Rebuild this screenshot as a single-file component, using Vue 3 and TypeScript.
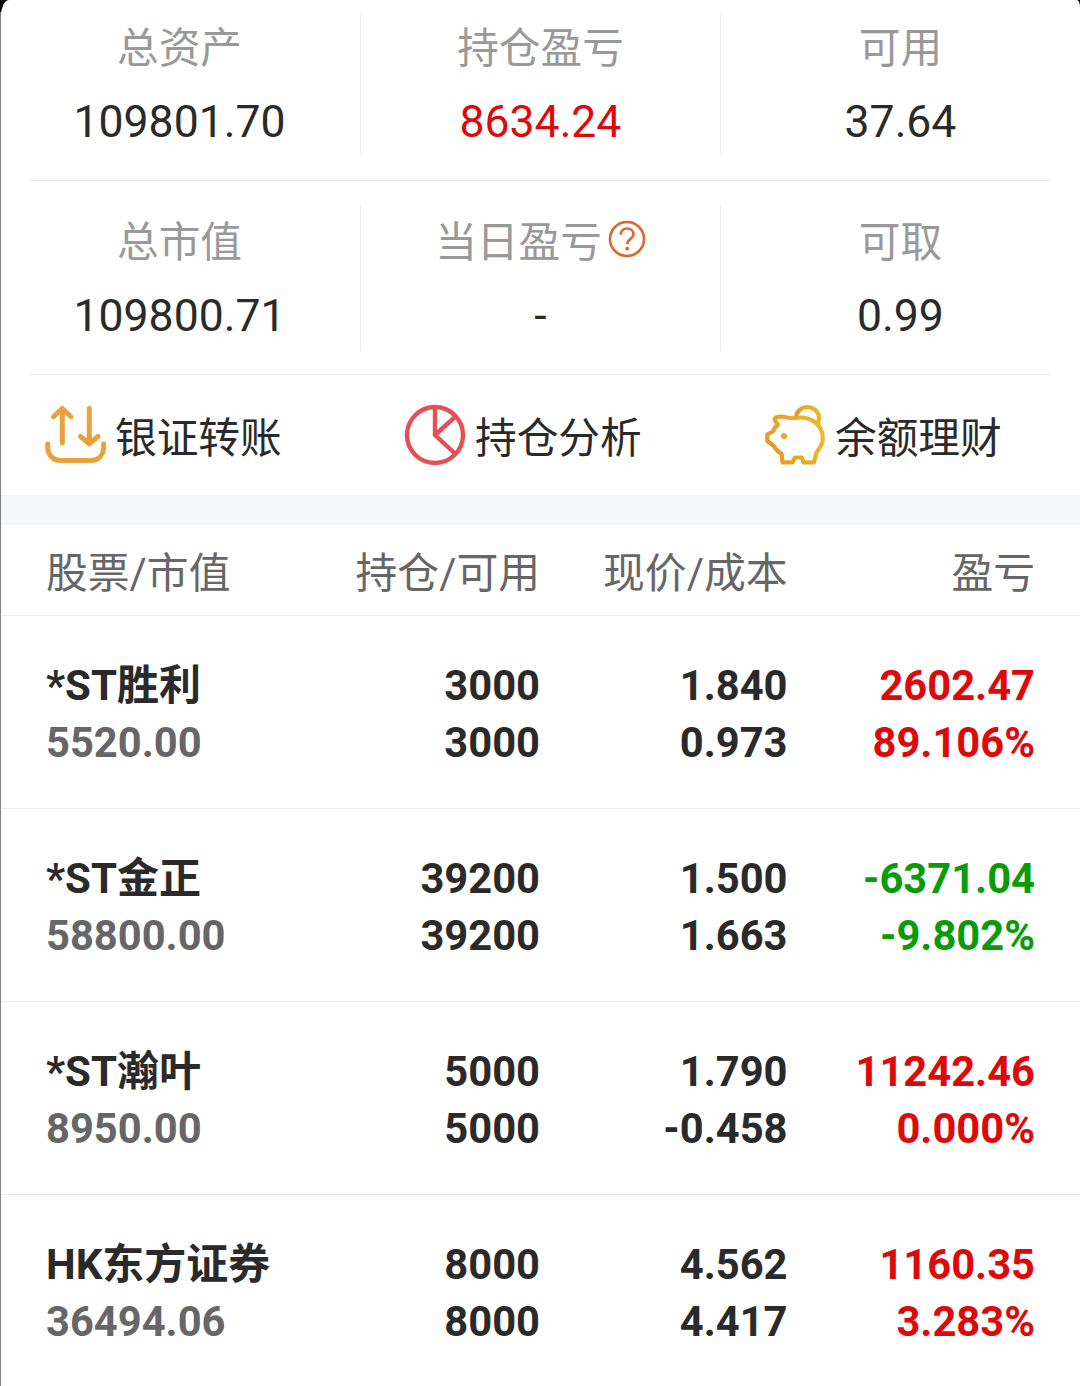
<script setup lang="ts">
interface Stat {
  label: string
  value: string
  tone?: 'up' | 'down'
  help?: boolean
}

interface Holding {
  name: string
  marketValue: string
  held: string
  available: string
  price: string
  cost: string
  profit: string
  ratio: string
  tone: 'up' | 'down'
}

const statRows: Stat[][] = [
  [
    { label: '总资产', value: '109801.70' },
    { label: '持仓盈亏', value: '8634.24', tone: 'up' },
    { label: '可用', value: '37.64' },
  ],
  [
    { label: '总市值', value: '109800.71' },
    { label: '当日盈亏', value: '-', help: true },
    { label: '可取', value: '0.99' },
  ],
]

const columns: string[] = ['股票/市值', '持仓/可用', '现价/成本', '盈亏']

const holdings: Holding[] = [
  { name: '*ST胜利', marketValue: '5520.00', held: '3000', available: '3000', price: '1.840', cost: '0.973', profit: '2602.47', ratio: '89.106%', tone: 'up' },
  { name: '*ST金正', marketValue: '58800.00', held: '39200', available: '39200', price: '1.500', cost: '1.663', profit: '-6371.04', ratio: '-9.802%', tone: 'down' },
  { name: '*ST瀚叶', marketValue: '8950.00', held: '5000', available: '5000', price: '1.790', cost: '-0.458', profit: '11242.46', ratio: '0.000%', tone: 'up' },
  { name: 'HK东方证券', marketValue: '36494.06', held: '8000', available: '8000', price: '4.562', cost: '4.417', profit: '1160.35', ratio: '3.283%', tone: 'up' },
]
</script>

<template>
  <div class="screen">
    <main class="sheet">
      <section class="summary">
        <div v-for="(row, i) in statRows" :key="i" class="stat-row">
          <div v-for="stat in row" :key="stat.label" class="stat">
            <div class="stat-label">
              <span>{{ stat.label }}</span>
              <svg v-if="stat.help" class="help" viewBox="0 0 38 38" fill="none" stroke="#dd6632" stroke-width="2.6">
                <circle cx="19" cy="19" r="17" />
                <path d="M12.8 14.8C12.8 10.8 15.3 8.5 19 8.5C22.8 8.5 25.5 10.9 25.5 14.2C25.5 18.6 19.2 18.9 19.2 24.3" />
                <circle cx="19.2" cy="28.6" r="1.9" fill="#dd6632" stroke="none" />
              </svg>
            </div>
            <div class="stat-value" :class="stat.tone">{{ stat.value }}</div>
          </div>
        </div>
      </section>

      <nav class="actions">
        <div class="action">
          <svg class="icon" viewBox="0 0 62 62" fill="none" stroke="#e9a13b" stroke-width="5" stroke-linecap="round" stroke-linejoin="round">
            <path d="M18.3 39V5M9.5 12.8L18.3 4.5L27 12.8" />
            <path d="M45.3 4.5V39M36.5 32.3L45.3 40L54 32.3" />
            <path d="M3.7 40V42.5C3.7 51 9 56.5 17 56.5H46C54.5 56.5 59.7 51 59.7 42.5V40" />
          </svg>
          <span>银证转账</span>
        </div>
        <div class="action">
          <svg class="icon" viewBox="0 0 62 62" fill="none" stroke="#e65054" stroke-width="4.4">
            <circle cx="31" cy="31" r="28" />
            <path d="M31 3V31L51.5 50M31 31L51.5 12.5" />
          </svg>
          <span>持仓分析</span>
        </div>
        <div class="action">
          <svg class="icon" viewBox="0 0 62 62" fill="none" stroke-width="4.2" stroke-linejoin="round" stroke-linecap="round">
            <defs>
              <linearGradient id="gold" x1="0" y1="0.6" x2="1" y2="0.3">
                <stop offset="0" stop-color="#e59a27" />
                <stop offset="1" stop-color="#eeb72a" />
              </linearGradient>
            </defs>
            <path stroke="url(#gold)" d="M32 13.3C32.7 7.3 37.5 3 43.5 3C50 3 55 8 55 14C55 16.3 54.5 18 53.8 20" />
            <path stroke="url(#gold)" d="M10.5 15C12 12.5 15.5 12.3 19.5 12.8C23 13.5 26 14.5 30 14.2C46 11 58.8 20 58.8 34.5C58.8 41 55 44.5 52.5 48.5L50 58.3H39.5L37.700 53.5H31L28.5 58.3H18.5L17.5 49.5C13.5 48 11.5 44.5 9.3 41.5L3.3 37V30.5L8.8 27.5C10 25 11.5 22.5 14 20.5C12.5 18.5 11 17.5 10.5 15Z" />
            <circle cx="20" cy="32" r="3" fill="#e7a12a" />
          </svg>
          <span>余额理财</span>
        </div>
      </nav>

      <div class="band"></div>

      <section class="table">
        <div class="row head">
          <div v-for="c in columns" :key="c" class="cell">{{ c }}</div>
        </div>
        <div v-for="h in holdings" :key="h.name" class="row body">
          <div class="cell">
            <div class="name">{{ h.name }}</div>
            <div class="muted">{{ h.marketValue }}</div>
          </div>
          <div class="cell">
            <div>{{ h.held }}</div>
            <div>{{ h.available }}</div>
          </div>
          <div class="cell">
            <div>{{ h.price }}</div>
            <div>{{ h.cost }}</div>
          </div>
          <div class="cell" :class="h.tone">
            <div>{{ h.profit }}</div>
            <div>{{ h.ratio }}</div>
          </div>
        </div>
      </section>
    </main>
  </div>
</template>

<style>
body {
  background: #fefefe;
}
</style>

<style scoped>
.screen {
  box-sizing: border-box;
  width: 1080px;
  height: 1386px;
  overflow: hidden;
  background: linear-gradient(#000 0 12px, #808080 12px);
  font-family: Roboto, "Noto Sans CJK SC", sans-serif;
  color: #2a2a2a;
}
.sheet {
  box-sizing: border-box;
  height: 1386px;
  margin-left: 1px;
  overflow: hidden;
  background: #fefefe;
  border-radius: 8px 3px 0 0 / 16px 7px 0 0;
}
.summary {
  padding: 0 30px 0 29px;
}
.stat-row {
  box-sizing: border-box;
  display: flex;
  height: 194px;
  padding: 24px 0 23px;
  border-bottom: 1px solid #ececec;
}
.stat-row:first-child {
  height: 181px;
  padding-top: 11px;
}
.stat {
  box-sizing: border-box;
  flex: 0 0 360px;
  border-left: 1px solid #f0f0f0;
}
.stat:first-child {
  flex-basis: 330px;
  padding-right: 31px;
  border-left: 0;
}
.stat:last-child {
  flex: 1;
  padding-left: 30px;
}
.stat-label {
  display: flex;
  align-items: center;
  justify-content: center;
  height: 74px;
  font-size: 41.7px;
  line-height: 75px;
  color: #999;
}
.stat-label span {
  height: 74px;
}
.help {
  width: 38px;
  height: 38px;
  margin: 0 0 6px 6px;
}
.stat-value {
  height: 73px;
  font-size: 44.5px;
  line-height: 75px;
  text-align: center;
}
.actions {
  display: flex;
  height: 120px;
}
.action {
  flex: 0 0 360px;
  box-sizing: border-box;
  display: flex;
  align-items: center;
  padding-left: 43px;
  font-size: 41.7px;
  line-height: 60px;
}
.action span {
  padding-top: 7px;
}
.icon {
  width: 62px;
  height: 62px;
  margin-right: 9px;
}
.band {
  height: 30px;
  background: #f5f6f9;
}
.row {
  box-sizing: border-box;
  display: grid;
  grid-template-columns: repeat(4, 247.5px);
  padding: 0 45px 0 44px;
  border-bottom: 1px solid #ececec;
}
.cell {
  text-align: right;
  white-space: nowrap;
}
.cell:first-child {
  padding-left: 1px;
  text-align: left;
}
.head {
  height: 91px;
  font-size: 41.8px;
  line-height: 97px;
  color: #666;
}
.body {
  height: 193px;
  padding-top: 41px;
  font-size: 41.7px;
  font-weight: 700;
  line-height: 57px;
}
.body:last-child {
  border-bottom: 0;
}
.body .cell > div {
  height: 57px;
}
.body .name {
  font-size: 42px;
}
.muted {
  color: #666;
}
.up {
  color: #dc0a0a;
}
.down {
  color: #0a9b0a;
}
</style>
